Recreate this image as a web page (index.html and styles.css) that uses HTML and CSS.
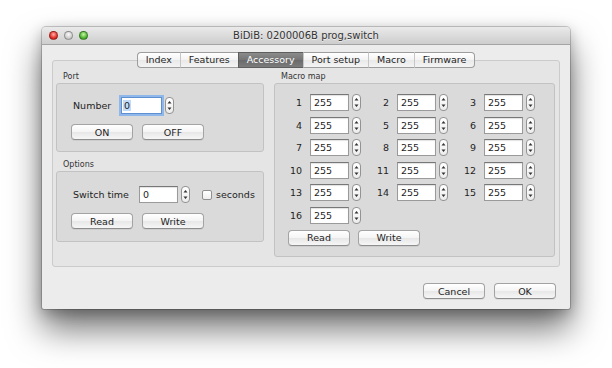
FILE: index.html
```html
<!DOCTYPE html>
<html lang="en">
<head>
    <meta charset="UTF-8">
    <title>BiDiB: 0200006B prog,switch</title>
    <link rel="stylesheet" href="styles.css">
</head>
<body>
    <div class="window">
        <div class="titlebar">
            <div class="lights">
                <span class="light red"></span>
                <span class="light grey"></span>
                <span class="light green"></span>
            </div>
            <div class="title">BiDiB: 0200006B prog,switch</div>
        </div>

        <div class="content">
            <div class="tabs">
                <span class="tab">Index</span>
                <span class="tab">Features</span>
                <span class="tab selected">Accessory</span>
                <span class="tab">Port setup</span>
                <span class="tab">Macro</span>
                <span class="tab">Firmware</span>
            </div>

            <div class="pane">
                <!-- left column: port + options -->
                <div class="col left">
                    <div class="group-label">Port</div>
                    <div class="group port">
                        <div class="row">
                            <span class="label number-label">Number</span>
                            <span class="field focus"><span class="sel">0</span></span>
                            <span class="spin"><svg width="9" height="17" viewBox="0 0 9 17"><path d="M2.5 6.5 L4.5 4 L6.5 6.5 Z M2.5 10.5 L4.5 13 L6.5 10.5 Z" fill="#333"/></svg></span>
                        </div>
                        <div class="buttons">
                            <button>ON</button>
                            <button>OFF</button>
                        </div>
                    </div>

                    <div class="group-label second">Options</div>
                    <div class="group options">
                        <div class="row">
                            <span class="label time-label">Switch time</span>
                            <span class="field">0</span>
                            <span class="spin"><svg width="9" height="17" viewBox="0 0 9 17"><path d="M2.5 6.5 L4.5 4 L6.5 6.5 Z M2.5 10.5 L4.5 13 L6.5 10.5 Z" fill="#333"/></svg></span>
                            <span class="checkbox"></span>
                            <span class="label">seconds</span>
                        </div>
                        <div class="buttons">
                            <button>Read</button>
                            <button>Write</button>
                        </div>
                    </div>
                </div>

                <!-- right column: macro map -->
                <div class="col right">
                    <div class="group-label">Macro map</div>
                    <div class="group macro">
                        <div class="macro-grid" id="macro-grid"></div>
                        <div class="buttons">
                            <button>Read</button>
                            <button>Write</button>
                        </div>
                    </div>
                </div>
            </div>

            <div class="dialog-buttons">
                <button>Cancel</button>
                <button>OK</button>
            </div>
        </div>
    </div>

    <script>
        // build the 16 macro map entries
        const grid = document.getElementById("macro-grid");
        const spinSvg = '<svg width="9" height="17" viewBox="0 0 9 17"><path d="M2.5 6.5 L4.5 4 L6.5 6.5 Z M2.5 10.5 L4.5 13 L6.5 10.5 Z" fill="#333"/></svg>';
        for (let i = 1; i <= 16; i++) {
            const cell = document.createElement("div");
            cell.className = "macro-cell";
            cell.innerHTML = `<span class="macro-num">${i}</span><span class="field">255</span><span class="spin">${spinSvg}</span>`;
            grid.appendChild(cell);
        }
    </script>
</body>
</html>
```

FILE: styles.css
```css
* {
    box-sizing: border-box;
    margin: 0;
    padding: 0;
}

html {
    background-color: #fff;
}

body {
    min-height: 368px;
    font-family: "DejaVu Sans", Verdana, sans-serif;
    font-size: 9.5px;
    color: #1e1e1e;
    padding: 27px 0 0 42px;
}

.window {
    width: 528px;
    height: 282px;
    background-color: #ececec;
    border-radius: 4px 4px 2px 2px;
    box-shadow: 0 0 0 1px rgba(0, 0, 0, 0.18), 0 4px 14px rgba(0, 0, 0, 0.25), 0 20px 34px rgba(0, 0, 0, 0.55);
}

/* Title bar */
.titlebar {
    height: 18px;
    display: grid;
    grid-template-columns: 1fr auto 1fr;
    align-items: center;
    background: linear-gradient(#eaeaea, #cdcdcd);
    border-bottom: 1px solid #a4a4a4;
    border-radius: 4px 4px 0 0;
}

.lights {
    display: flex;
    gap: 6px;
    padding-left: 7px;
}

.light {
    width: 9px;
    height: 9px;
    border-radius: 50%;
    border: 1px solid rgba(0, 0, 0, 0.3);
}

.light.red {
    background: radial-gradient(circle at 50% 35%, #ffb0a8, #e2312a 60%, #a81410);
}

.light.grey {
    background: radial-gradient(circle at 50% 35%, #fafafa, #cfcfcf 60%, #a7a7a7);
}

.light.green {
    background: radial-gradient(circle at 50% 35%, #c9f5a8, #52b633 60%, #2c7d18);
}

.title {
    font-size: 10px;
    color: #333;
    text-shadow: 0 1px 0 rgba(255, 255, 255, 0.6);
}

.content {
    padding: 7px 10px 0 10px;
}

/* Tabs */
.tabs {
    display: flex;
    justify-content: center;
    position: relative;
    z-index: 1;
}

.tab {
    height: 16px;
    line-height: 14px;
    padding: 0 8px;
    background: linear-gradient(#ffffff, #f3f3f3 50%, #e9e9e9 51%, #f4f4f4);
    border: 1px solid #9d9d9d;
    border-left: 1px solid #c6c6c6;
    border-right: none;
}

.tab:first-child {
    border-left: 1px solid #9d9d9d;
    border-radius: 4px 0 0 4px;
}

.tab:last-child {
    border-right: 1px solid #9d9d9d;
    border-radius: 0 4px 4px 0;
}

.tab.selected {
    background: linear-gradient(#8c8c8c, #747474 50%, #6a6a6a 51%, #7c7c7c);
    border-color: #5e5e5e;
    color: #fff;
}

/* Tab pane */
.pane {
    margin-top: -8px;
    display: flex;
    gap: 10px;
    padding: 10px 4px 9px 3px;
    background-color: #e5e5e5;
    border: 1px solid #cbcbcb;
    border-radius: 3px;
}

.col.left {
    width: 208px;
}

.col.right {
    flex: 1;
}

.group-label {
    height: 12px;
    line-height: 12px;
    font-size: 8px;
    padding-left: 7px;
    color: #333;
}

.group-label.second {
    margin-top: 7px;
}

.group {
    background-color: #dadada;
    border: 1px solid #c2c2c2;
    border-radius: 3px;
}

.group.port {
    height: 69px;
    padding: 13px 0 0 15px;
}

.group.options {
    height: 71px;
    padding: 14px 0 0 15px;
}

.group.macro {
    height: 174px;
    padding: 10px 0 0 11px;
}

.row {
    display: flex;
    align-items: center;
    height: 17px;
}

.label {
    padding-left: 1px;
}

.number-label {
    width: 49px;
}

.time-label {
    width: 67px;
}

/* Text fields and spinners */
.field {
    display: block;
    width: 39px;
    height: 17px;
    line-height: 15px;
    padding: 0 3px;
    background-color: #fff;
    border: 1px solid #9a9a9a;
    border-top-color: #777;
    box-shadow: inset 0 1px 1px rgba(0, 0, 0, 0.12);
}

.field.focus {
    width: 41px;
    padding: 0 1px;
    border-color: #5d8fd1;
    box-shadow: 0 0 0 2px #8fb7ea;
}

.sel {
    background-color: #c2dbfb;
    padding: 0 1px;
}

.spin {
    display: block;
    width: 9px;
    height: 17px;
    margin-left: 3px;
    border: 1px solid #939393;
    border-radius: 4px;
    background: linear-gradient(#ffffff, #ececec);
    overflow: hidden;
}

.spin svg {
    display: block;
    margin: -1px 0 0 -1px;
}

.checkbox {
    width: 10px;
    height: 10px;
    margin: 0 3px 0 12px;
    background: linear-gradient(#fff, #eee);
    border: 1px solid #909090;
    border-radius: 2px;
}

/* Buttons */
button {
    width: 62px;
    height: 16px;
    font-family: inherit;
    font-size: 9.5px;
    color: #1e1e1e;
    background: linear-gradient(#ffffff, #f4f4f4 50%, #e7e7e7 51%, #f6f6f6);
    border: 1px solid #a3a3a3;
    border-bottom-color: #8d8d8d;
    border-radius: 4px;
    box-shadow: 0 1px 0 rgba(0, 0, 0, 0.06);
}

.buttons {
    display: flex;
    gap: 9px;
    margin-top: 10px;
    margin-left: -1px;
}

.group.macro .buttons {
    margin-top: 6px;
    margin-left: 2px;
    gap: 8px;
}

/* Macro map grid */
.macro-grid {
    display: grid;
    grid-template-columns: repeat(3, 75px);
    grid-auto-rows: 17px;
    column-gap: 12px;
    row-gap: 5.6px;
}

.macro-cell {
    display: flex;
    align-items: center;
}

.macro-num {
    width: 16px;
    margin-right: 8px;
    text-align: right;
}

.dialog-buttons {
    display: flex;
    justify-content: flex-end;
    gap: 9px;
    margin-top: 16px;
    padding-right: 4px;
}
```
